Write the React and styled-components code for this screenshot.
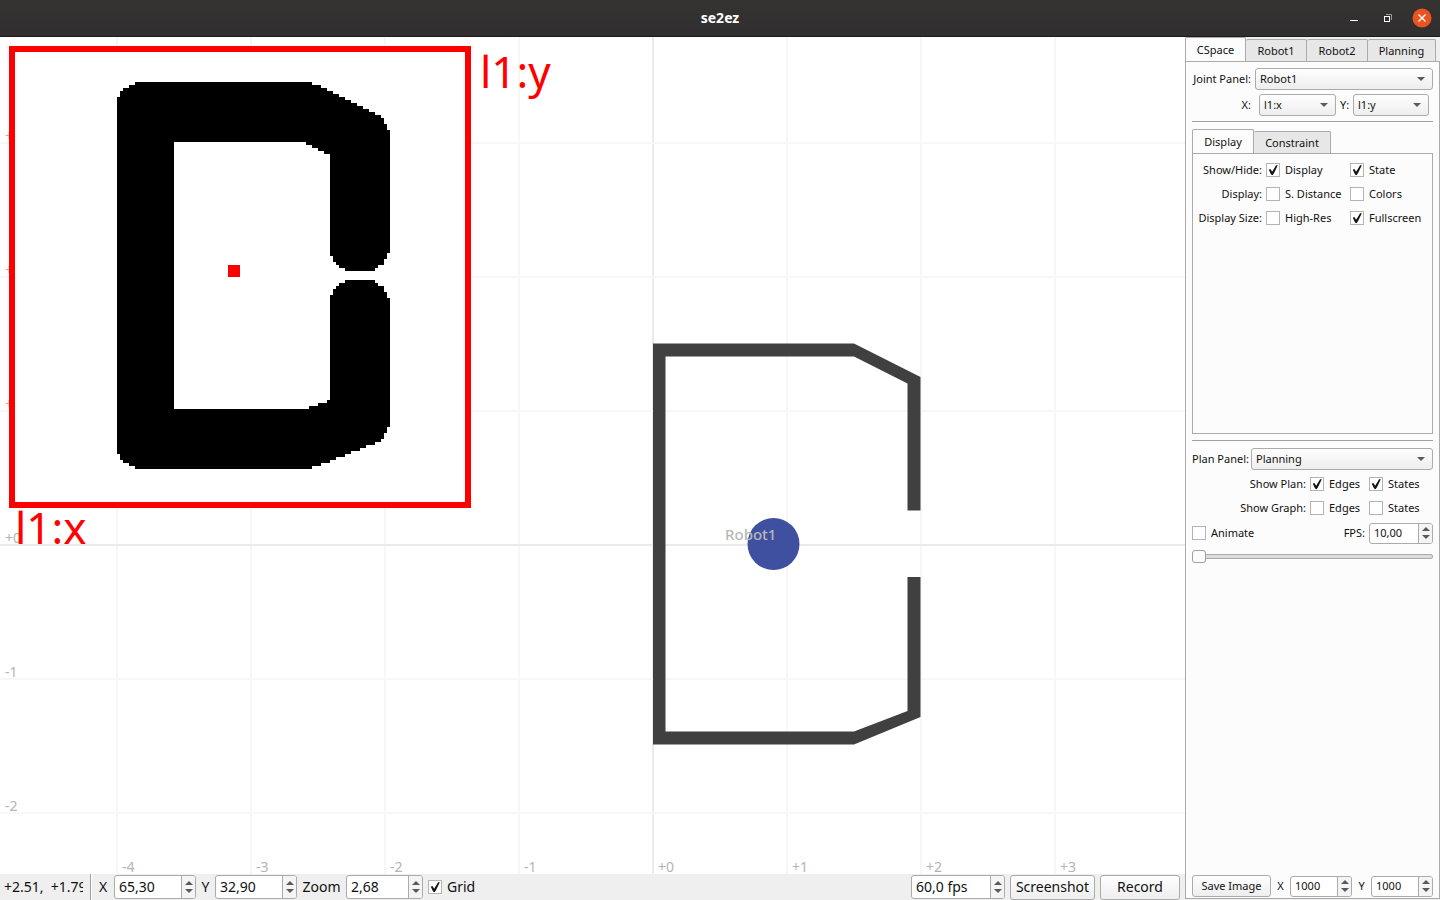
import React, { useState } from "react";
import styled, { createGlobalStyle, css } from "styled-components";

const GlobalStyle = createGlobalStyle`
  *, *::before, *::after { box-sizing: border-box; }
  body { margin: 0; }
  button, input, select { font: inherit; color: inherit; margin: 0; }
`;

const LINE = "#ababab";

const Window = styled.div`
  display: flex;
  flex-direction: column;
  height: 100vh;
  background: #efefef;
  color: #111;
  font: 14px/20px "Noto Sans", sans-serif;
`;

const TitleBar = styled.header`
  display: grid;
  grid-template-columns: 1fr auto 1fr;
  align-items: center;
  flex: none;
  height: 37px;
  padding: 0 8px;
  background: linear-gradient(#353232, #302e2e);
  border-bottom: 1px solid #1c1a1a;
  color: #fff;
`;

const Title = styled.h1`
  grid-column: 2;
  margin: 0;
  font-size: 14px;
  font-weight: 700;
`;

const WindowButtons = styled.div`
  display: flex;
  justify-content: flex-end;
  gap: 14px;
`;

const WindowButton = styled.button`
  display: grid;
  place-items: center;
  width: 20px;
  height: 20px;
  padding: 0;
  border: 0;
  background: none;
`;

const Body = styled.div`
  display: flex;
  flex: 1;
  min-height: 0;
`;

const Workspace = styled.main`
  display: flex;
  flex-direction: column;
  flex: 1;
  min-width: 0;
`;

const Canvas = styled.div`
  flex: 1;
  min-height: 0;
  overflow: hidden;
  background: #fff;
`;

const Scene = styled.svg`
  display: block;
  width: 100%;
  height: 100%;
  font-family: "Noto Sans", sans-serif;
`;

const Toolbar = styled.footer`
  display: flex;
  align-items: center;
  justify-content: space-between;
  flex: none;
  height: 26px;
  padding: 0 5px 0 4px;
`;

const Group = styled.div`
  display: flex;
  align-items: center;
  gap: 5px;
`;

const Coordinates = styled.output`
  width: 81px;
  padding-right: 2px;
  overflow: clip;
  overflow-clip-margin: content-box;
  white-space: pre;
`;

const Separator = styled.div`
  width: 2px;
  height: 26px;
  border-left: 1px solid #a0a0a0;
  border-right: 1px solid #fff;
`;

const Sidebar = styled.aside`
  display: flex;
  flex-direction: column;
  flex: none;
  width: 255px;
  padding-bottom: 1px;
  font-size: 11px;
  line-height: 14px;
`;

const TabList = styled.div`
  display: flex;
  align-items: flex-end;
  height: 24px;
  flex: none;
`;

const Tab = styled.button`
  height: 22px;
  width: ${(p) => p.$width}px;
  padding: 0;
  background: #e7e7e7;
  border: 1px solid ${LINE};
  border-left-width: ${(p) => (p.$first ? 1 : 0)}px;
  border-bottom: 0;
  border-radius: 2px 2px 0 0;
  ${(p) =>
    p.$selected &&
    css`
      height: 25px;
      margin-bottom: -1px;
      background: #fcfcfc;
    `}
`;

const TabPane = styled.section`
  display: flex;
  flex-direction: column;
  flex: ${(p) => (p.$fill ? "1" : "none")};
  background: #fcfcfc;
  border: 1px solid ${LINE};
`;

const MainPane = styled(TabPane)`
  padding: 6px 6px 1px;
`;

const DisplayPane = styled(TabPane)`
  height: 281px;
  padding: 4px 0;
`;

const Row = styled.div`
  display: flex;
  align-items: center;
  flex: none;
  height: ${(p) => p.$height || 24}px;
  gap: 4px;
`;

const RowLabel = styled.span`
  width: ${(p) => p.$width}px;
  padding-right: ${(p) => p.$pad || 0}px;
  text-align: ${(p) => (p.$center ? "center" : "right")};
  white-space: nowrap;
`;

const Rule = styled.hr`
  flex: none;
  width: 100%;
  height: 1px;
  margin: ${(p) => p.$margin};
  border: 0;
  background: #a0a0a0;
`;

const Spacer = styled.div`
  flex: 1;
`;

const raised = css`
  border: 1px solid ${LINE};
  border-radius: 3px;
  background: linear-gradient(#fefefe, #eeeeee);
`;

const ComboBox = styled.div`
  display: flex;
  position: relative;
  flex: ${(p) => (p.$width ? "none" : "1")};
  width: ${(p) => (p.$width ? `${p.$width}px` : "auto")};
  &::after {
    content: "";
    position: absolute;
    right: 8px;
    top: 9px;
    border: 4px solid transparent;
    border-top-color: #5a5a5a;
    border-bottom: 0;
    pointer-events: none;
  }
`;

const ComboSelect = styled.select`
  ${raised}
  appearance: none;
  width: 100%;
  height: 22px;
  padding: 0 16px 0 4px;
`;

const PushButton = styled.button`
  ${raised}
  flex: none;
  width: ${(p) => p.$width}px;
  height: ${(p) => (p.$small ? 22 : 25)}px;
  padding: 0;
  white-space: nowrap;
`;

const SpinFrame = styled.div`
  display: flex;
  flex: none;
  width: ${(p) => p.$width}px;
  height: ${(p) => (p.$small ? 21 : 24)}px;
  border: 1px solid ${LINE};
  border-radius: 3px;
  background: #fff;
  overflow: hidden;
`;

const SpinInput = styled.input`
  flex: 1;
  min-width: 0;
  padding: 0 0 0 4px;
  border: 0;
  background: none;
  outline: none;
`;

const SpinButtons = styled.div`
  display: flex;
  flex-direction: column;
  width: 14px;
  border-left: 1px solid ${LINE};
  background: #f4f4f4;
`;

const SpinButton = styled.button`
  display: flex;
  flex: 1;
  align-items: ${(p) => (p.$down ? "flex-start" : "flex-end")};
  justify-content: center;
  min-height: 0;
  padding: 2px 0;
  border: 0;
  background: none;
  &::after {
    content: "";
    border: 4px solid transparent;
    border-${(p) => (p.$down ? "bottom" : "top")}-width: 0;
    border-${(p) => (p.$down ? "top" : "bottom")}-color: #5a5a5a;
  }
`;

const CheckLabel = styled.label`
  display: flex;
  align-items: center;
  gap: 5px;
  width: ${(p) => (p.$width ? `${p.$width}px` : "auto")};
  white-space: nowrap;
`;

const CheckInput = styled.input`
  appearance: none;
  flex: none;
  width: 14px;
  height: 14px;
  border: 1px solid #b4b4b4;
  background: #fff;
  &:checked::after {
    content: "";
    display: block;
    width: 12px;
    height: 12px;
    background: #111;
    clip-path: polygon(15% 48%, 28% 42%, 43% 64%, 76% 10%, 90% 10%, 58% 78%, 46% 94%, 34% 88%);
  }
`;

const Slider = styled.input`
  appearance: none;
  flex: none;
  width: 100%;
  height: 16px;
  background: none;
  &::-webkit-slider-runnable-track {
    height: 5px;
    border: 1px solid ${LINE};
    border-radius: 2px;
    background: #dcdcdc;
  }
  &::-webkit-slider-thumb {
    appearance: none;
    width: 14px;
    height: 13px;
    margin: -5px 0 0 -1px;
    border: 1px solid #a0a0a0;
    border-radius: 3px;
    background: #fcfcfc;
  }
`;

function Check({ label, width, checked = false }) {
  return (
    <CheckLabel $width={width}>
      <CheckInput type="checkbox" defaultChecked={checked} />
      {label}
    </CheckLabel>
  );
}

function Spin({ label, value, width, small }) {
  return (
    <SpinFrame $width={width} $small={small}>
      <SpinInput type="text" aria-label={label} defaultValue={value} />
      <SpinButtons>
        <SpinButton aria-label={`Increase ${label}`} />
        <SpinButton $down aria-label={`Decrease ${label}`} />
      </SpinButtons>
    </SpinFrame>
  );
}

function Combo({ label, options, width }) {
  return (
    <ComboBox $width={width}>
      <ComboSelect aria-label={label}>
        {options.map((o) => (
          <option key={o}>{o}</option>
        ))}
      </ComboSelect>
    </ComboBox>
  );
}

function Tabs({ items }) {
  const [selected, setSelected] = useState(0);
  return (
    <TabList role="tablist">
      {items.map(([name, width], i) => (
        <Tab
          key={name}
          role="tab"
          aria-selected={i === selected}
          $selected={i === selected}
          $first={i === 0}
          $width={width}
          onClick={() => setSelected(i)}
        >
          {name}
        </Tab>
      ))}
    </TabList>
  );
}

// World grid: one unit is 134px, with the origin at (653, 508) in the canvas.
const UNIT = 134;
const ORIGIN = { x: 653, y: 508 };
const columns = [-4, -3, -2, -1, 0, 1, 2, 3];
const rows = [3, 2, 1, 0, -1, -2];
const signed = (n) => (n < 0 ? `${n}` : `+${n}`);

// Blocked cells of the configuration space, on a 3px raster.
const OBSTACLE =
  "M135 45H312V48H321V51H327V54H333V57H339V60H345V63H351V66H357V69H363V72H369V75H375V78H381V81H384V87H387V93H390V216" +
  "H387V222H384V228H378V231H375V234H345V231H339V228H336V225H333V219H330V117H324V114H318V111H312V108H306V105H174" +
  "V372H309V369H318V366H327V363H330V258H333V252H336V249H339V246H345V243H375V246H378V249H384V255H387V261H390V390" +
  "H387V396H384V402H381V405H375V408H366V411H360V414H351V417H345V420H336V423H330V426H321V429H312V432H135" +
  "V429H129V426H123V423H120V417H117V60H120V54H123V51H129V48H135Z";

function WorldView() {
  return (
    <Scene role="img" aria-label="Robot workspace">
      {columns.map((n) => (
        <rect key={`c${n}`} x={ORIGIN.x + n * UNIT - 1} y="0" width="2" height="100%" fill={n === 0 ? "#ebebeb" : "#f7f7f7"} />
      ))}
      {rows.map((n) => (
        <rect key={`r${n}`} x="0" y={ORIGIN.y - n * UNIT - 1} width="100%" height="2" fill={n === 0 ? "#ebebeb" : "#f7f7f7"} />
      ))}
      <path
        d="M653 306.500H854L920.500 340V473.500H907.500V346.500L854 319.500H665.500V694.500H854L907.500 674V540H920.500V680L854 707.500H653Z"
        fill="#404040"
      />
      <circle cx="773.500" cy="507" r="26" fill="#4050a0" />
      <g fill="#b4b4b4" fontSize="14">
        {columns.map((n) => (
          <text key={n} x={ORIGIN.x + n * UNIT + 5} y="100%" dy="-2">{signed(n)}</text>
        ))}
        {rows.map((n) => (
          <text key={n} x="5" y={ORIGIN.y - n * UNIT - 2}>{signed(n)}</text>
        ))}
      </g>
      <text x="725" y="503" fill="#b8b8b8" fontSize="15" fontWeight="500">Robot1</text>
      <rect x="12" y="12" width="456" height="456" fill="#fff" stroke="#f00" strokeWidth="6" />
      <path d={OBSTACLE} fill="#000" shapeRendering="crispEdges" />
      <rect x="228" y="228" width="12" height="12" fill="#f00" />
      <g fill="#f00" fontSize="44">
        <text x="480" y="51">l1:y</text>
        <text x="15" y="507">l1:x</text>
      </g>
    </Scene>
  );
}

export default function App() {
  return (
    <>
      <GlobalStyle />
      <Window>
        <TitleBar>
          <Title>se2ez</Title>
          <WindowButtons>
            <WindowButton aria-label="Minimize">
              <svg width="20" height="20"><path d="M6 12.500h8" stroke="#fff" /></svg>
            </WindowButton>
            <WindowButton aria-label="Restore">
              <svg width="20" height="20" fill="none">
                <path d="M8 6.500h5.500v5.500" stroke="#999" />
                <rect x="6.500" y="8.500" width="5" height="5" stroke="#fff" />
              </svg>
            </WindowButton>
            <WindowButton aria-label="Close">
              <svg width="20" height="20">
                <circle cx="10" cy="10" r="9.500" fill="#e95420" />
                <path d="M6.500 6.500l7 7M13.500 6.500l-7 7" stroke="#fff" strokeWidth="1.400" />
              </svg>
            </WindowButton>
          </WindowButtons>
        </TitleBar>
        <Body>
          <Workspace>
            <Canvas>
              <WorldView />
            </Canvas>
            <Toolbar>
              <Group>
                <Coordinates>{"+2.51,  +1.79"}</Coordinates>
                <Separator />
                <RowLabel $width={12} $center>X</RowLabel>
                <Spin label="X" value="65,30" width={82} />
                <RowLabel $width={9} $center>Y</RowLabel>
                <Spin label="Y" value="32,90" width={82} />
                <RowLabel $width={39} $center>Zoom</RowLabel>
                <Spin label="Zoom" value="2,68" width={77} />
                <Check label="Grid" checked />
              </Group>
              <Group>
                <Spin label="Frame rate" value="60,0 fps" width={94} />
                <PushButton $width={85}>Screenshot</PushButton>
                <PushButton $width={80}>Record</PushButton>
              </Group>
            </Toolbar>
          </Workspace>
          <Sidebar>
            <Tabs items={[["CSpace", 61], ["Robot1", 61], ["Robot2", 61], ["Planning", 68]]} />
            <MainPane $fill>
              <Row $height={22}>
                <RowLabel $width={59}>Joint Panel:</RowLabel>
                <Combo label="Joint Panel" options={["Robot1", "Robot2"]} />
              </Row>
              <Row $height={30}>
                <RowLabel $width={63} $pad={4}>X:</RowLabel>
                <Combo label="X joint" options={["l1:x", "l1:y"]} width={77} />
                <RowLabel $width={9}>Y:</RowLabel>
                <Combo label="Y joint" options={["l1:y", "l1:x"]} width={76} />
              </Row>
              <Rule $margin="1px 0 7px" />
              <Tabs items={[["Display", 62], ["Constraint", 77]]} />
              <DisplayPane>
                <Row>
                  <RowLabel $width={69}>Show/Hide:</RowLabel>
                  <Check label="Display" width={80} checked />
                  <Check label="State" checked />
                </Row>
                <Row>
                  <RowLabel $width={69}>Display:</RowLabel>
                  <Check label="S. Distance" width={80} />
                  <Check label="Colors" />
                </Row>
                <Row>
                  <RowLabel $width={69}>Display Size:</RowLabel>
                  <Check label="High-Res" width={80} />
                  <Check label="Fullscreen" checked />
                </Row>
              </DisplayPane>
              <Rule $margin="6px 0 7px" />
              <Row $height={22}>
                <RowLabel $width={55}>Plan Panel:</RowLabel>
                <Combo label="Plan Panel" options={["Planning"]} />
              </Row>
              <Row $height={28}>
                <RowLabel $width={114}>Show Plan:</RowLabel>
                <Check label="Edges" width={55} checked />
                <Check label="States" checked />
              </Row>
              <Row $height={20}>
                <RowLabel $width={114}>Show Graph:</RowLabel>
                <Check label="Edges" width={55} />
                <Check label="States" />
              </Row>
              <Row $height={30}>
                <Check label="Animate" />
                <Spacer />
                <RowLabel>FPS:</RowLabel>
                <Spin label="FPS" value="10,00" width={64} small />
              </Row>
              <Slider type="range" aria-label="Plan position" min="0" max="100" defaultValue="0" />
              <Spacer />
              <Row $height={22}>
                <PushButton $width={79} $small>Save Image</PushButton>
                <RowLabel $width={11} $center>X</RowLabel>
                <Spin label="Image width" value="1000" width={62} small />
                <RowLabel $width={11} $center>Y</RowLabel>
                <Spin label="Image height" value="1000" width={62} small />
              </Row>
            </MainPane>
          </Sidebar>
        </Body>
      </Window>
    </>
  );
}
